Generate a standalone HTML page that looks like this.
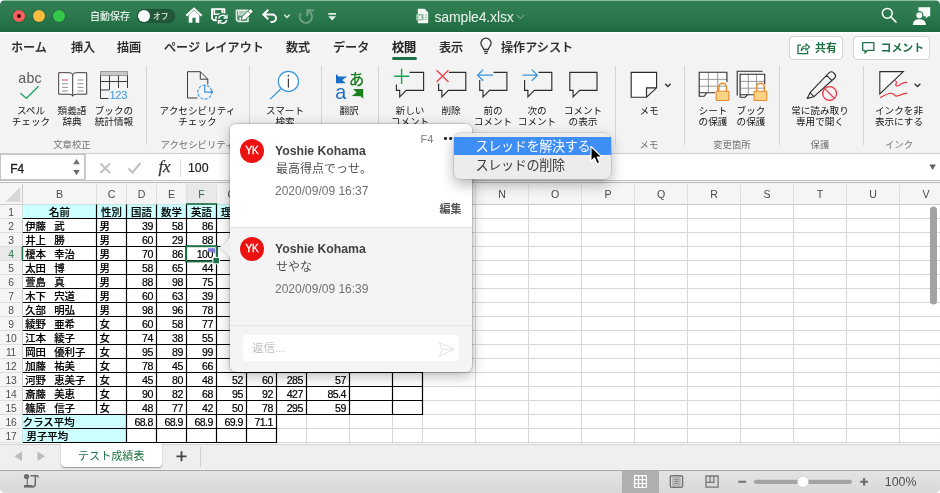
<!DOCTYPE html>
<html lang="ja"><head><meta charset="utf-8"><title>sample4.xlsx</title>
<style>
*{box-sizing:border-box;margin:0;padding:0}
html,body{width:940px;height:493px;overflow:hidden;background:#fff}
body{font-family:"Liberation Sans","Noto Sans CJK JP",sans-serif;position:relative;color:#333}
#win{position:absolute;left:0;top:0;width:940px;height:493px;border-radius:5px 5px 5px 5px;overflow:hidden;background:#f3f3f3;will-change:transform;transform:translateZ(0)}
.abs{position:absolute}
#title{position:absolute;left:0;top:0;width:940px;height:32px;background:linear-gradient(#8cbd9f 0,#8cbd9f 1px,#317f53 1px,#2d7a4f 14px,#206c42 31px,#1c643c 32px)}
.tl{position:absolute;top:10px;width:12px;height:12px;border-radius:50%}
#tabs{position:absolute;left:0;top:32px;width:940px;height:31px;background:#f4f4f4}
.tab{position:absolute;top:38px;height:20px;line-height:20px;font-size:12.1px;font-weight:500;color:#2a2a2a;white-space:nowrap;letter-spacing:0;-webkit-text-stroke:.15px #2a2a2a}
#ribbon{position:absolute;left:0;top:63px;width:940px;height:90px;background:#f3f3f3}
.sep{position:absolute;top:66px;width:1px;height:79px;background:#d4d4d4}
.rl{position:absolute;top:106.3px;width:120px;margin-left:-60px;text-align:center;font-size:9.65px;line-height:10.8px;color:#161616;white-space:nowrap;font-weight:400}
.gl{position:absolute;top:138px;width:120px;margin-left:-60px;text-align:center;font-size:9.4px;line-height:14px;color:#707070;white-space:nowrap}
.ico{position:absolute;overflow:visible}
#fbar{position:absolute;left:0;top:153px;width:940px;height:30px;background:#fff;border-top:1px solid #cfcfcf}
#grid{position:absolute;left:0;top:183px;width:940px;height:260px}
#tabbar{position:absolute;left:0;top:444px;width:940px;height:26px;background:#efefef}
#status{position:absolute;left:0;top:470px;width:940px;height:23px;background:linear-gradient(#e3e3e3,#d8d8d8);border-top:1px solid #a9a9a9}
</style></head>
<body><div id="win">
<div id="title"><div class="tl" style="left:13px;background:#fc615d;box-shadow:0 0 0 .6px rgba(0,0,0,.22)"></div><div class="tl" style="left:33px;background:#fdbc40;box-shadow:0 0 0 .6px rgba(0,0,0,.22)"></div><div class="tl" style="left:53px;background:#34c84a;box-shadow:0 0 0 .6px rgba(0,0,0,.22)"></div><div class="abs" style="left:17px;top:14px;width:4px;height:4px;border-radius:50%;background:#4d0000"></div><div class="abs" style="left:90px;top:9.500px;font-size:10px;line-height:14px;font-weight:500;color:#e9f2ec;white-space:nowrap">自動保存</div><div class="abs" style="left:137.300px;top:9.300px;width:37.500px;height:13.500px;border-radius:7px;background:#235739;box-shadow:inset 0 0 0 .5px #1d4c31"></div><div class="abs" style="left:138px;top:9.900px;width:12.300px;height:12.300px;border-radius:50%;background:#fff"></div><div class="abs" style="left:153px;top:9.700px;font-size:7.800px;line-height:13px;font-weight:500;color:#e3ece6;white-space:nowrap">オフ</div><svg class="ico" style="left:0;top:0" width="940" height="32" viewBox="0 0 940 32"><path d="M186.300 15.800 L194 8.600 L201.700 15.800" fill="none" stroke="#fff" stroke-width="2.100"/><path d="M188.700 15.300 L194 10.400 L199.300 15.300 V22.700 H195.600 V17.800 H192.400 V22.700 H188.700 Z" fill="#fff"/><path d="M212 9.100 H224.400 V20.300 H214 L212 18.300 Z" fill="none" stroke="#fff" stroke-width="1.900" stroke-linejoin="round"/><path d="M214.300 9.100 V14.300 H222.300 V9.100" fill="none" stroke="#fff" stroke-width="1.600"/><rect x="215.300" y="16.400" width="3.300" height="4" fill="#fff"/><circle cx="222.700" cy="19.300" r="6.200" fill="#27744a"/><path d="M218.700 18.600 A4.100 4.100 0 0 1 226.200 17.200" fill="none" stroke="#fff" stroke-width="1.400"/><path d="M227 14.600 V18 H223.600" fill="none" stroke="#fff" stroke-width="1.300"/><path d="M226.700 20 A4.100 4.100 0 0 1 219.200 21.400" fill="none" stroke="#fff" stroke-width="1.400"/><path d="M218.400 24 V20.600 H221.800" fill="none" stroke="#fff" stroke-width="1.300"/><path d="M236.400 10.300 H248 V21.600 H238.400 L236.400 19.600 Z" fill="rgba(255,255,255,.22)" stroke="#dcebe2" stroke-width="1.500" stroke-linejoin="round"/><path d="M238.600 10.300 V15 H246 V10.300" fill="rgba(255,255,255,.5)" stroke="#dcebe2" stroke-width="1.100"/><rect x="239.600" y="17.400" width="3.200" height="4" fill="#e9f2ed"/><path d="M241.200 20.600 L242.300 16.400 L249.300 9.400 a1.500 1.500 0 0 1 2.100 0 l1 1 a1.500 1.500 0 0 1 0 2.100 L245.400 19.500 Z" fill="#fff" stroke="#256f47" stroke-width=".900"/><path d="M247.800 10.900 L250.900 14" stroke="#256f47" stroke-width=".700"/><path d="M263.800 14.500 H272.300 a3.700 3.700 0 0 1 0 7.400 H270.500" fill="none" stroke="#fff" stroke-width="2"/><path d="M268.300 9.700 L263.300 14.500 L268.300 19.300" fill="none" stroke="#fff" stroke-width="2"/><path d="M284.300 14.700 L287 17.500 L289.700 14.700" fill="none" stroke="#e3ede7" stroke-width="1.400"/><path d="M300.900 13.300 A6.100 6.100 0 1 0 311.100 13.600 L307.800 10.800" fill="none" stroke="#72a489" stroke-width="1.900"/><path d="M307.300 16.200 V10.300 H313.800" fill="none" stroke="#72a489" stroke-width="1.900"/><path d="M328.300 13.900 H336" stroke="#e6efe9" stroke-width="1.700"/><path d="M328.300 16.300 H336 L332.150 20.500 Z" fill="#e6efe9"/></svg><svg class="ico" style="left:416px;top:8px" width="13" height="16" viewBox="0 0 13 16"><path d="M2.5 .8 H8.6 L12.2 4.4 V14.6 a.7.7 0 0 1-.7.7 H2.5 a.7.7 0 0 1-.7-.7 V1.5 a.7.7 0 0 1 .7-.7z" fill="#f4f8f5"/><rect x="0" y="6" width="7.6" height="6.6" rx=".8" fill="#8dbb9e"/><path d="M2 7.4 L5.6 11.4 M5.6 7.4 L2 11.4" stroke="#fff" stroke-width="1.1"/><path d="M8.8 7h2.4M8.8 9.2h2.4M8.8 11.4h2.4" stroke="#8dbb9e" stroke-width="1"/></svg><div class="abs" style="left:434.5px;top:7.6px;font-size:14px;line-height:18px;color:#eef4f0;white-space:nowrap;letter-spacing:-.15px">sample4.xlsx</div><svg class="ico" style="left:516px;top:14px" width="9" height="6" viewBox="0 0 9 6"><path d="M1 1 L4.5 4.5 L8 1" fill="none" stroke="#6fa387" stroke-width="1.1"/></svg><svg class="ico" style="left:880.300px;top:6.200px" width="18" height="18" viewBox="0 0 18 18"><circle cx="7.3" cy="7.3" r="4.9" fill="none" stroke="#fff" stroke-width="1.5"/><path d="M10.9 10.9 L16 16" stroke="#fff" stroke-width="1.7" stroke-linecap="round"/></svg><svg class="ico" style="left:912px;top:6px" width="20" height="20" viewBox="0 0 20 20"><path d="M6.500 1.200 H18.200 V10.300 H16.300 L13.800 12.600 V10.300 H6.500 Z" fill="#fff"/><circle cx="7.3" cy="9.3" r="3.6" fill="#fff" stroke="#2a774c" stroke-width="1.2"/><path d="M.8 19 C1 14.8 3.6 13.2 7.3 13.2 S13.6 14.8 13.8 19 Z" fill="#fff"/></svg></div>
<div id="tabs"></div><div class="abs" style="left:0;top:32px;width:940px;height:1.500px;background:#fdfdfd"></div><div class="tab" style="left:11px">ホーム</div><div class="tab" style="left:71px">挿入</div><div class="tab" style="left:117px">描画</div><div class="tab" style="left:164px">ページ レイアウト</div><div class="tab" style="left:286px">数式</div><div class="tab" style="left:333px">データ</div><div class="tab" style="left:392px;font-weight:700;color:#222">校閲</div><div class="tab" style="left:439px">表示</div><div class="tab" style="left:501px">操作アシスト</div><div class="abs" style="left:392px;top:57px;width:25px;height:3px;border-radius:1.500px;background:#1e7145"></div><svg class="ico" style="left:479.400px;top:37.200px" width="14" height="18" viewBox="0 0 14 18"><path d="M4.600 12.300 C4.600 10.200 1.900 9.300 1.900 6.300 a5.100 5.100 0 0 1 10.200 0 C12.100 9.300 9.400 10.200 9.400 12.300 Z" fill="none" stroke="#333" stroke-width="1.250"/><path d="M4.900 14.300 H9.100 M5.500 16.300 H8.500" stroke="#333" stroke-width="1.250"/></svg><div class="abs" style="left:789px;top:36px;width:54px;height:24px;border:1px solid #d2d2d2;border-radius:4px;background:#fff"></div><svg class="ico" style="left:796px;top:41px" width="15" height="14" viewBox="0 0 15 14"><path d="M5 4.2 H2 V12.6 H11.6 V9.6" fill="none" stroke="#1e7145" stroke-width="1.3"/><path d="M5.3 9.6 C5.6 6.6 7.4 5 10 5 V2.8 L13.6 6 L10 9.2 V7 C8 7 6.6 7.8 5.3 9.6 Z" fill="none" stroke="#1e7145" stroke-width="1.1" stroke-linejoin="round"/></svg><div class="abs" style="left:815px;top:38px;font-size:10.900px;line-height:20px;font-weight:700;color:#1e7145;white-space:nowrap">共有</div><div class="abs" style="left:853px;top:36px;width:76.500px;height:24px;border:1px solid #d2d2d2;border-radius:4px;background:#fff"></div><svg class="ico" style="left:861px;top:41px" width="15" height="14" viewBox="0 0 15 14"><path d="M1.7 1.7 H12.9 V9.3 H6.6 L4 12 V9.3 H1.7 Z" fill="none" stroke="#1e7145" stroke-width="1.3" stroke-linejoin="round"/></svg><div class="abs" style="left:880.500px;top:38px;font-size:10.900px;line-height:20px;font-weight:700;color:#1e7145;white-space:nowrap">コメント</div>
<div id="ribbon"></div><div class="sep" style="left:146px"></div><div class="sep" style="left:249px"></div><div class="sep" style="left:321px"></div><div class="sep" style="left:378px"></div><div class="sep" style="left:615px"></div><div class="sep" style="left:684px"></div><div class="sep" style="left:779px"></div><div class="sep" style="left:863px"></div><div class="rl" style="left:31px">スペル<br>チェック</div><div class="rl" style="left:72px">類義語<br>辞典</div><div class="rl" style="left:114px">ブックの<br>統計情報</div><div class="rl" style="left:197.5px">アクセシビリティ<br>チェック</div><div class="rl" style="left:285px">スマート<br>検索</div><div class="rl" style="left:349px">翻訳</div><div class="rl" style="left:410px">新しい<br>コメント</div><div class="rl" style="left:451px">削除</div><div class="rl" style="left:493px">前の<br>コメント</div><div class="rl" style="left:537px">次の<br>コメント</div><div class="rl" style="left:583px">コメント<br>の表示</div><div class="rl" style="left:649px">メモ</div><div class="rl" style="left:713px">シート<br>の保護</div><div class="rl" style="left:751px">ブック<br>の保護</div><div class="rl" style="left:820px">常に読み取り<br>専用で開く</div><div class="rl" style="left:899px">インクを非<br>表示にする</div><div class="gl" style="left:72px">文章校正</div><div class="gl" style="left:197.5px">アクセシビリティ</div><div class="gl" style="left:649px">メモ</div><div class="gl" style="left:732px">変更箇所</div><div class="gl" style="left:820px">保護</div><div class="gl" style="left:899px">インク</div><div class="abs" style="left:18.3px;top:67.6px;font-size:14.2px;line-height:20px;color:#5c5c5c;letter-spacing:.2px">abc</div><svg class="ico" style="left:0;top:63px" width="940" height="90" viewBox="0 63 940 90"><path d="M20.3 93.2 L26.4 98.3 L38.6 86.2" fill="none" stroke="#21a366" stroke-width="1.3"/><path d="M58.7 72.7 H69 Q72.7 72.7 72.7 75 Q72.7 72.7 76.4 72.7 H86.7 V94.2 H76.4 Q72.7 94.2 72.7 96.3 Q72.7 94.2 69 94.2 H58.7 Z M72.7 75 V96" fill="#fff" stroke="#3b3b3b" stroke-width="1"/><path d="M62 80 h6" stroke="#e8414d" stroke-width="1"/><path d="M62 83.700 h6 M62 87.400 h6 M62 91 h6 M77.500 80 h6 M77.500 83.700 h6 M77.500 87.400 h6 M77.500 91 h6" stroke="#777" stroke-width=".8"/><rect x="100.500" y="71.500" width="27" height="4" fill="#c9c9c9" stroke="#8a8a8a" stroke-width=".8"/><path d="M100.500 75.500 V98.500 H108.500 M127.500 75.500 V88 M100.500 81.500 H127.500 M100.500 90 H109 M109.500 75.500 V90 M118.500 75.500 V88" fill="none" stroke="#3b3b3b" stroke-width="1"/><text x="109.400" y="98.700" font-size="11.200" fill="#3a96dd" font-family="Liberation Sans, sans-serif" letter-spacing="-.3">123</text><path d="M197.500 98 H187.500 V71.700 H200.300 L207.800 79.200 V84.500 M200.300 71.700 V79.200 H207.800" fill="none" stroke="#3b3b3b" stroke-width="1"/><circle cx="204.800" cy="92.100" r="7" fill="none" stroke="#3a96dd" stroke-width="1.100" stroke-dasharray="3 1.500" stroke-dashoffset="1"/><path d="M204.800 85.300 V92.100 H211.500" fill="none" stroke="#3a96dd" stroke-width="1.200"/><path d="M210.800 89.700 l2.800 2.400 -2.800 2.400z" fill="#3a96dd"/><circle cx="288.400" cy="81.400" r="10.100" fill="#fff" stroke="#3a96dd" stroke-width="1.200"/><path d="M281 88.800 L270.200 99.100" stroke="#3a96dd" stroke-width="1.300"/><path d="M288.400 78.500 V87.500" stroke="#3b3b3b" stroke-width="1.200"/><circle cx="288.400" cy="75.700" r=".9" fill="#3b3b3b"/><path d="M336 74.100 L338.600 76.400 L347.300 76.400 L342.300 79.900 L345.800 83.300 H336 Z" fill="#1b6ec8"/><text x="335.200" y="98.600" font-size="21" fill="#1b6ec8" font-family="Liberation Sans, sans-serif" textLength="11" lengthAdjust="spacingAndGlyphs">a</text><text x="348.700" y="85.200" font-size="15.600" font-weight="500" fill="#1a7f1e" font-family="Liberation Sans, Noto Sans CJK JP, sans-serif">あ</text><path d="M363.200 98.800 L360.600 96.300 L351.600 96.100 L356.600 92.600 L353.100 89.100 H363.200 Z" fill="#1a7f1e"/><path d="M409.5 72.300 H423.59999999999997 V90.300 H406.2 L399.7 96.800 V90.300 H396.4 V84.5" fill="none" stroke="#2d2d2d" stroke-width="1.150" stroke-linejoin="miter"/><path d="M401.600 68.700 V84 M394.300 76.300 H409.200" stroke="#13a34a" stroke-width="1.400"/><path d="M449 72.300 H465.8 V90.300 H448.40000000000003 L441.90000000000003 96.800 V90.300 H438.6 V83.5" fill="none" stroke="#2d2d2d" stroke-width="1.150" stroke-linejoin="miter"/><path d="M436.500 70.300 L448.500 82 M448.500 70.300 L436.500 82" stroke="#ef3e4a" stroke-width="1.300"/><path d="M493.5 72.300 H506.9 V90.300 H489.5 L483.0 96.800 V90.300 H479.7 V80" fill="none" stroke="#2d2d2d" stroke-width="1.150" stroke-linejoin="miter"/><path d="M477.600 75.200 H493 M483.200 69.600 L477.600 75.200 L483.200 80.800" fill="none" stroke="#3a96dd" stroke-width="1.300"/><path d="M538.5 72.300 H551.8000000000001 V90.300 H534.4 L527.9 96.800 V90.300 H524.6 V80" fill="none" stroke="#2d2d2d" stroke-width="1.150" stroke-linejoin="miter"/><path d="M522.400 75.200 H537.400 M531.800 69.600 L537.400 75.200 L531.800 80.800" fill="none" stroke="#3a96dd" stroke-width="1.300"/><path d="M569.8 72.300 H597.0 V90.300 H579.5999999999999 L573.0999999999999 96.800 V90.300 H569.8 V72.3 Z" fill="none" stroke="#2d2d2d" stroke-width="1.150" stroke-linejoin="miter"/><path d="M631.200 72.300 H656.600 V87.800 L646.500 97.200 H631.200 Z M656.600 87.800 H646.500 V97.200" fill="#fff" stroke="#2d2d2d" stroke-width="1.150" stroke-linejoin="miter"/><path d="M665.200 83.700 L667.900 86.500 L670.600 83.700" fill="none" stroke="#333" stroke-width="1.400"/><path d="M699.2 72.3 H726.9000000000001 V92.3 L722.9000000000001 96.3 H699.2 Z" fill="#fcfcfc" stroke="none"/><path d="M708.4 72.3 V92.69999999999999 M717.7 72.3 V92.69999999999999 M699.2 79.4 H726.9000000000001 M699.2 86.2 H726.9000000000001 " stroke="#8e8e8e" stroke-width=".9" fill="none"/><path d="M726.9000000000001 82.3 V72.3 H699.2 V96.3 H704.2 L706.9000000000001 92.69999999999999 M699.2 92.69999999999999 H715.2" fill="none" stroke="#2d2d2d" stroke-width="1.100"/><path d="M718.8000000000001 91.5 V87 a3.800 3.800 0 0 1 7.600 0 V91.5" fill="none" stroke="#e98b2c" stroke-width="1.500"/><rect x="716.2" y="91.2" width="12.700" height="9.300" rx=".6" fill="#fad384" stroke="#e98b2c" stroke-width="1.100"/><path d="M737.200 95.500 V71.200 H762.600" fill="none" stroke="#2d2d2d" stroke-width="1.100"/><path d="M740.1 74.3 H764.7 V93.19999999999999 L760.7 97.19999999999999 H740.1 Z" fill="#fcfcfc" stroke="none"/><path d="M748.3 74.3 V94.69999999999999 M756.5 74.3 V94.69999999999999 M740.1 81.4 H764.7 M740.1 88.2 H764.7 " stroke="#8e8e8e" stroke-width=".9" fill="none"/><path d="M764.7 84.3 V74.3 H740.1 V97.19999999999999 H745.1 L747.8000000000001 94.69999999999999 M740.1 94.69999999999999 H756.1" fill="none" stroke="#2d2d2d" stroke-width="1.100"/><path d="M756.7 91.5 V87 a3.800 3.800 0 0 1 7.600 0 V91.5" fill="none" stroke="#e98b2c" stroke-width="1.500"/><rect x="754.1" y="91.2" width="12.700" height="9.300" rx=".6" fill="#fad384" stroke="#e98b2c" stroke-width="1.100"/><path d="M810 92.700 L829.200 72.700 a2.900 2.900 0 0 1 4.200 0 l1.300 1.300 a2.900 2.900 0 0 1 0 4 L813.900 96.700 M810 92.700 L813.900 96.700 L807.200 98.400 Z M826.700 75.300 L832.200 80.800" fill="none" stroke="#2d2d2d" stroke-width="1.100" stroke-linejoin="round"/><circle cx="829.600" cy="93.500" r="6.900" fill="#f3f3f3" stroke="#f0323e" stroke-width="1.300"/><path d="M824.700 88.600 L834.500 98.400" stroke="#f0323e" stroke-width="1.300"/><path d="M879.800 71.600 H903.300 L879.800 94 Z" fill="#fafafa" stroke="#2d2d2d" stroke-width="1.100" stroke-linejoin="miter"/><path d="M894.500 80.500 c2 .5 2.500 2 1.500 3.500 s.5 2.500 3 1.200 s4-3.500 8.300-2.700" fill="none" stroke="#f0323e" stroke-width="1.200"/><path d="M880.200 97.800 c4-2.500 8-5 11.500-4.500 s2 3.300 5 2.800 s6-2.500 10.600-3" fill="none" stroke="#f0323e" stroke-width="1.200"/><path d="M914.600 83.700 L917.500 86.600 L920.400 83.700" fill="none" stroke="#333" stroke-width="1.400"/></svg>
<div id="fbar"></div><div class="abs" style="left:0;top:154px;width:84.500px;height:25.500px;border:1px solid #c4c4c4;background:#fff"></div><div class="abs" style="left:85px;top:154px;width:855px;height:26px;border-left:1px solid #d0d0d0;background:#fff"></div><div class="abs" style="left:10.200px;top:158.500px;font-size:12px;line-height:20px;color:#222;-webkit-text-stroke:.3px #222">F4</div><svg class="ico" style="left:0;top:153px" width="940" height="30" viewBox="0 153 940 30"><path d="M73.200 164.200 L76.500 159 L79.800 164.200 Z M73.200 170.100 L76.500 175.300 L79.800 170.100 Z" fill="#6e6e6e"/><path d="M100.500 163.500 L110 173 M110 163.500 L100.500 173" stroke="#c1c1c1" stroke-width="2" fill="none"/><path d="M128.500 168.500 L132.500 172.500 L140.500 163" stroke="#c1c1c1" stroke-width="2" fill="none"/><path d="M180.500 159 V177" stroke="#dcdcdc" stroke-width="1"/><path d="M929.300 164.600 H935.900 L932.600 170 Z" fill="#636363"/></svg><div class="abs" style="left:158.500px;top:155.800px;font-family:'Liberation Serif',serif;font-style:italic;font-size:17px;line-height:22px;color:#333;letter-spacing:-.3px;-webkit-text-stroke:.25px #333">fx</div><div class="abs" style="left:188px;top:158.300px;font-size:12.300px;line-height:20px;color:#222;-webkit-text-stroke:.2px #222">100</div><div class="abs" style="left:0;top:180px;width:940px;height:1px;background:#c4c4c4"></div><div class="abs" style="left:0;top:181px;width:940px;height:1px;background:#f6f6f6"></div><div class="abs" style="left:0;top:182px;width:940px;height:1px;background:#bdbdbd"></div><svg class="ico" style="left:0;top:183px" width="940" height="261" viewBox="0 183 940 261" font-family="Liberation Sans, Noto Sans CJK JP, sans-serif"><rect x="0" y="183" width="940" height="261" fill="#fff"/><rect x="0" y="183" width="940" height="21.100" fill="#f5f5f5"/><rect x="0" y="204" width="22.500" height="240" fill="#f5f5f5"/><rect x="186.500" y="183.500" width="30" height="20.500" fill="#e9e9e9"/><rect x="0" y="246.50" width="22.500" height="14.0" fill="#e9e9e9"/><path d="M96.5 204 V443.500 M126.5 204 V443.500 M156.5 204 V443.500 M186.5 204 V443.500 M216.5 204 V443.500 M246.5 204 V443.500 M276.5 204 V443.500 M306.5 204 V443.500 M349.5 204 V443.500 M392.5 204 V443.500 M422.5 204 V443.500 M475.5 204 V443.500 M528.5 204 V443.500 M581.5 204 V443.500 M634.5 204 V443.500 M687.5 204 V443.500 M740.5 204 V443.500 M793.5 204 V443.500 M846.5 204 V443.500 M899.5 204 V443.500 M952.5 204 V443.500 M22.500 218.50 H940 M22.500 232.50 H940 M22.500 246.50 H940 M22.500 260.50 H940 M22.500 274.50 H940 M22.500 288.50 H940 M22.500 302.50 H940 M22.500 316.50 H940 M22.500 330.50 H940 M22.500 344.50 H940 M22.500 358.50 H940 M22.500 372.50 H940 M22.500 386.50 H940 M22.500 400.50 H940 M22.500 414.50 H940 M22.500 428.50 H940 M22.500 442.50 H940 " stroke="#d6d6d6" stroke-width="1" fill="none"/><path d="M96.5 184.500 V204 M126.5 184.500 V204 M156.5 184.500 V204 M186.5 184.500 V204 M216.5 184.500 V204 M246.5 184.500 V204 M276.5 184.500 V204 M306.5 184.500 V204 M349.5 184.500 V204 M392.5 184.500 V204 M422.5 184.500 V204 M475.5 184.500 V204 M528.5 184.500 V204 M581.5 184.500 V204 M634.5 184.500 V204 M687.5 184.500 V204 M740.5 184.500 V204 M793.5 184.500 V204 M846.5 184.500 V204 M899.5 184.500 V204 M952.5 184.500 V204 M0 218.50 H22.500 M0 232.50 H22.500 M0 246.50 H22.500 M0 260.50 H22.500 M0 274.50 H22.500 M0 288.50 H22.500 M0 302.50 H22.500 M0 316.50 H22.500 M0 330.50 H22.500 M0 344.50 H22.500 M0 358.50 H22.500 M0 372.50 H22.500 M0 386.50 H22.500 M0 400.50 H22.500 M0 414.50 H22.500 M0 428.50 H22.500 M0 442.50 H22.500 " stroke="#dfdfdf" stroke-width="1" fill="none"/><path d="M0 204.50 H940 M22.500 184 V443.500" stroke="#c9c9c9" stroke-width="1" fill="none"/><path d="M20.300 187.300 V201.700 H5.500 Z" fill="#d6d6d6"/><rect x="22.500" y="204.50" width="400.0" height="14.0" fill="#ccffff"/><rect x="22.500" y="414.50" width="104.0" height="28.00" fill="#ccffff"/><path d="M22.900 218.50 H423.100 M22.900 232.50 H423.100 M22.900 246.50 H423.100 M22.900 260.50 H423.100 M22.900 274.50 H423.100 M22.900 288.50 H423.100 M22.900 302.50 H423.100 M22.900 316.50 H423.100 M22.900 330.50 H423.100 M22.900 344.50 H423.100 M22.900 358.50 H423.100 M22.900 372.50 H423.100 M22.900 386.50 H423.100 M22.900 400.50 H423.100 M22.900 414.50 H423.100 M22.900 428.50 H277.100 M22.900 442.50 H277.100 M96.5 204.50 V414.50 M126.5 204.50 V414.50 M156.5 204.50 V414.50 M186.5 204.50 V414.50 M216.5 204.50 V414.50 M246.5 204.50 V414.50 M276.5 204.50 V414.50 M306.5 204.50 V414.50 M349.5 204.50 V414.50 M392.5 204.50 V414.50 M422.5 204.50 V414.50 M126.5 414.50 V442.50 M156.5 414.50 V442.50 M186.5 414.50 V442.50 M216.5 414.50 V442.50 M246.5 414.50 V442.50 M276.5 414.50 V442.50 " stroke="#000" stroke-width="1.200" fill="none"/><text x="59.5" y="198" font-size="10.600" text-anchor="middle" fill="#4a4a4a">B</text><text x="111.5" y="198" font-size="10.600" text-anchor="middle" fill="#4a4a4a">C</text><text x="141.5" y="198" font-size="10.600" text-anchor="middle" fill="#4a4a4a">D</text><text x="171.5" y="198" font-size="10.600" text-anchor="middle" fill="#4a4a4a">E</text><text x="201.5" y="198" font-size="10.600" text-anchor="middle" fill="#1e7145">F</text><text x="231.5" y="198" font-size="10.600" text-anchor="middle" fill="#4a4a4a">G</text><text x="261.5" y="198" font-size="10.600" text-anchor="middle" fill="#4a4a4a">H</text><text x="291.5" y="198" font-size="10.600" text-anchor="middle" fill="#4a4a4a">I</text><text x="328.0" y="198" font-size="10.600" text-anchor="middle" fill="#4a4a4a">J</text><text x="371.0" y="198" font-size="10.600" text-anchor="middle" fill="#4a4a4a">K</text><text x="407.5" y="198" font-size="10.600" text-anchor="middle" fill="#4a4a4a">L</text><text x="449.0" y="198" font-size="10.600" text-anchor="middle" fill="#4a4a4a">M</text><text x="502.0" y="198" font-size="10.600" text-anchor="middle" fill="#4a4a4a">N</text><text x="555.0" y="198" font-size="10.600" text-anchor="middle" fill="#4a4a4a">O</text><text x="608.0" y="198" font-size="10.600" text-anchor="middle" fill="#4a4a4a">P</text><text x="661.0" y="198" font-size="10.600" text-anchor="middle" fill="#4a4a4a">Q</text><text x="714.0" y="198" font-size="10.600" text-anchor="middle" fill="#4a4a4a">R</text><text x="767.0" y="198" font-size="10.600" text-anchor="middle" fill="#4a4a4a">S</text><text x="820.0" y="198" font-size="10.600" text-anchor="middle" fill="#4a4a4a">T</text><text x="873.0" y="198" font-size="10.600" text-anchor="middle" fill="#4a4a4a">U</text><text x="926.0" y="198" font-size="10.600" text-anchor="middle" fill="#4a4a4a">V</text><text x="10.900" y="215.70" font-size="10.300" text-anchor="middle" fill="#505050" letter-spacing="-.4">1</text><text x="10.900" y="229.70" font-size="10.300" text-anchor="middle" fill="#505050" letter-spacing="-.4">2</text><text x="10.900" y="243.70" font-size="10.300" text-anchor="middle" fill="#505050" letter-spacing="-.4">3</text><text x="10.900" y="257.70" font-size="10.300" text-anchor="middle" fill="#1e7145" letter-spacing="-.4">4</text><text x="10.900" y="271.70" font-size="10.300" text-anchor="middle" fill="#505050" letter-spacing="-.4">5</text><text x="10.900" y="285.70" font-size="10.300" text-anchor="middle" fill="#505050" letter-spacing="-.4">6</text><text x="10.900" y="299.70" font-size="10.300" text-anchor="middle" fill="#505050" letter-spacing="-.4">7</text><text x="10.900" y="313.70" font-size="10.300" text-anchor="middle" fill="#505050" letter-spacing="-.4">8</text><text x="10.900" y="327.70" font-size="10.300" text-anchor="middle" fill="#505050" letter-spacing="-.4">9</text><text x="10.900" y="341.70" font-size="10.300" text-anchor="middle" fill="#505050" letter-spacing="-.4">10</text><text x="10.900" y="355.70" font-size="10.300" text-anchor="middle" fill="#505050" letter-spacing="-.4">11</text><text x="10.900" y="369.70" font-size="10.300" text-anchor="middle" fill="#505050" letter-spacing="-.4">12</text><text x="10.900" y="383.70" font-size="10.300" text-anchor="middle" fill="#505050" letter-spacing="-.4">13</text><text x="10.900" y="397.70" font-size="10.300" text-anchor="middle" fill="#505050" letter-spacing="-.4">14</text><text x="10.900" y="411.70" font-size="10.300" text-anchor="middle" fill="#505050" letter-spacing="-.4">15</text><text x="10.900" y="425.70" font-size="10.300" text-anchor="middle" fill="#505050" letter-spacing="-.4">16</text><text x="10.900" y="439.70" font-size="10.300" text-anchor="middle" fill="#505050" letter-spacing="-.4">17</text><text x="59.5" y="215.80" font-size="10.4" font-weight="500" text-anchor="middle" fill="#000" stroke="#000" stroke-width=".18">名前</text><text x="111.5" y="215.80" font-size="10.4" font-weight="500" text-anchor="middle" fill="#000" stroke="#000" stroke-width=".18">性別</text><text x="141.5" y="215.80" font-size="10.4" font-weight="500" text-anchor="middle" fill="#000" stroke="#000" stroke-width=".18">国語</text><text x="171.5" y="215.80" font-size="10.4" font-weight="500" text-anchor="middle" fill="#000" stroke="#000" stroke-width=".18">数学</text><text x="201.5" y="215.80" font-size="10.4" font-weight="500" text-anchor="middle" fill="#000" stroke="#000" stroke-width=".18">英語</text><text x="231.5" y="215.80" font-size="10.4" font-weight="500" text-anchor="middle" fill="#000" stroke="#000" stroke-width=".18">理科</text><text x="25.2" y="229.80" font-size="10.4" font-weight="500" text-anchor="start" fill="#000" stroke="#000" stroke-width=".18">伊藤</text><text x="54.2" y="229.80" font-size="10.4" font-weight="500" text-anchor="start" fill="#000" stroke="#000" stroke-width=".18">武</text><text x="99.5" y="229.80" font-size="10.4" font-weight="500" text-anchor="start" fill="#000" stroke="#000" stroke-width=".18">男</text><text x="152.8" y="229.70" font-size="10.600" text-anchor="end" fill="#000" letter-spacing="-.55" stroke="#000" stroke-width=".2">39</text><text x="182.8" y="229.70" font-size="10.600" text-anchor="end" fill="#000" letter-spacing="-.55" stroke="#000" stroke-width=".2">58</text><text x="212.8" y="229.70" font-size="10.600" text-anchor="end" fill="#000" letter-spacing="-.55" stroke="#000" stroke-width=".2">86</text><text x="25.2" y="243.80" font-size="10.4" font-weight="500" text-anchor="start" fill="#000" stroke="#000" stroke-width=".18">井上</text><text x="54.2" y="243.80" font-size="10.4" font-weight="500" text-anchor="start" fill="#000" stroke="#000" stroke-width=".18">勝</text><text x="99.5" y="243.80" font-size="10.4" font-weight="500" text-anchor="start" fill="#000" stroke="#000" stroke-width=".18">男</text><text x="152.8" y="243.70" font-size="10.600" text-anchor="end" fill="#000" letter-spacing="-.55" stroke="#000" stroke-width=".2">60</text><text x="182.8" y="243.70" font-size="10.600" text-anchor="end" fill="#000" letter-spacing="-.55" stroke="#000" stroke-width=".2">29</text><text x="212.8" y="243.70" font-size="10.600" text-anchor="end" fill="#000" letter-spacing="-.55" stroke="#000" stroke-width=".2">88</text><text x="25.2" y="257.80" font-size="10.4" font-weight="500" text-anchor="start" fill="#000" stroke="#000" stroke-width=".18">榎本</text><text x="54.2" y="257.80" font-size="10.4" font-weight="500" text-anchor="start" fill="#000" stroke="#000" stroke-width=".18">幸治</text><text x="99.5" y="257.80" font-size="10.4" font-weight="500" text-anchor="start" fill="#000" stroke="#000" stroke-width=".18">男</text><text x="152.8" y="257.70" font-size="10.600" text-anchor="end" fill="#000" letter-spacing="-.55" stroke="#000" stroke-width=".2">70</text><text x="182.8" y="257.70" font-size="10.600" text-anchor="end" fill="#000" letter-spacing="-.55" stroke="#000" stroke-width=".2">86</text><text x="212.8" y="257.70" font-size="10.600" text-anchor="end" fill="#000" letter-spacing="-.55" stroke="#000" stroke-width=".2">100</text><text x="25.2" y="271.80" font-size="10.4" font-weight="500" text-anchor="start" fill="#000" stroke="#000" stroke-width=".18">太田</text><text x="54.2" y="271.80" font-size="10.4" font-weight="500" text-anchor="start" fill="#000" stroke="#000" stroke-width=".18">博</text><text x="99.5" y="271.80" font-size="10.4" font-weight="500" text-anchor="start" fill="#000" stroke="#000" stroke-width=".18">男</text><text x="152.8" y="271.70" font-size="10.600" text-anchor="end" fill="#000" letter-spacing="-.55" stroke="#000" stroke-width=".2">58</text><text x="182.8" y="271.70" font-size="10.600" text-anchor="end" fill="#000" letter-spacing="-.55" stroke="#000" stroke-width=".2">65</text><text x="212.8" y="271.70" font-size="10.600" text-anchor="end" fill="#000" letter-spacing="-.55" stroke="#000" stroke-width=".2">44</text><text x="25.2" y="285.80" font-size="10.4" font-weight="500" text-anchor="start" fill="#000" stroke="#000" stroke-width=".18">萱島</text><text x="54.2" y="285.80" font-size="10.4" font-weight="500" text-anchor="start" fill="#000" stroke="#000" stroke-width=".18">真</text><text x="99.5" y="285.80" font-size="10.4" font-weight="500" text-anchor="start" fill="#000" stroke="#000" stroke-width=".18">男</text><text x="152.8" y="285.70" font-size="10.600" text-anchor="end" fill="#000" letter-spacing="-.55" stroke="#000" stroke-width=".2">88</text><text x="182.8" y="285.70" font-size="10.600" text-anchor="end" fill="#000" letter-spacing="-.55" stroke="#000" stroke-width=".2">98</text><text x="212.8" y="285.70" font-size="10.600" text-anchor="end" fill="#000" letter-spacing="-.55" stroke="#000" stroke-width=".2">75</text><text x="25.2" y="299.80" font-size="10.4" font-weight="500" text-anchor="start" fill="#000" stroke="#000" stroke-width=".18">木下</text><text x="54.2" y="299.80" font-size="10.4" font-weight="500" text-anchor="start" fill="#000" stroke="#000" stroke-width=".18">宍道</text><text x="99.5" y="299.80" font-size="10.4" font-weight="500" text-anchor="start" fill="#000" stroke="#000" stroke-width=".18">男</text><text x="152.8" y="299.70" font-size="10.600" text-anchor="end" fill="#000" letter-spacing="-.55" stroke="#000" stroke-width=".2">60</text><text x="182.8" y="299.70" font-size="10.600" text-anchor="end" fill="#000" letter-spacing="-.55" stroke="#000" stroke-width=".2">63</text><text x="212.8" y="299.70" font-size="10.600" text-anchor="end" fill="#000" letter-spacing="-.55" stroke="#000" stroke-width=".2">39</text><text x="25.2" y="313.80" font-size="10.4" font-weight="500" text-anchor="start" fill="#000" stroke="#000" stroke-width=".18">久部</text><text x="54.2" y="313.80" font-size="10.4" font-weight="500" text-anchor="start" fill="#000" stroke="#000" stroke-width=".18">明弘</text><text x="99.5" y="313.80" font-size="10.4" font-weight="500" text-anchor="start" fill="#000" stroke="#000" stroke-width=".18">男</text><text x="152.8" y="313.70" font-size="10.600" text-anchor="end" fill="#000" letter-spacing="-.55" stroke="#000" stroke-width=".2">98</text><text x="182.8" y="313.70" font-size="10.600" text-anchor="end" fill="#000" letter-spacing="-.55" stroke="#000" stroke-width=".2">96</text><text x="212.8" y="313.70" font-size="10.600" text-anchor="end" fill="#000" letter-spacing="-.55" stroke="#000" stroke-width=".2">78</text><text x="25.2" y="327.80" font-size="10.4" font-weight="500" text-anchor="start" fill="#000" stroke="#000" stroke-width=".18">綾野</text><text x="54.2" y="327.80" font-size="10.4" font-weight="500" text-anchor="start" fill="#000" stroke="#000" stroke-width=".18">亜希</text><text x="99.5" y="327.80" font-size="10.4" font-weight="500" text-anchor="start" fill="#000" stroke="#000" stroke-width=".18">女</text><text x="152.8" y="327.70" font-size="10.600" text-anchor="end" fill="#000" letter-spacing="-.55" stroke="#000" stroke-width=".2">60</text><text x="182.8" y="327.70" font-size="10.600" text-anchor="end" fill="#000" letter-spacing="-.55" stroke="#000" stroke-width=".2">58</text><text x="212.8" y="327.70" font-size="10.600" text-anchor="end" fill="#000" letter-spacing="-.55" stroke="#000" stroke-width=".2">77</text><text x="25.2" y="341.80" font-size="10.4" font-weight="500" text-anchor="start" fill="#000" stroke="#000" stroke-width=".18">江本</text><text x="54.2" y="341.80" font-size="10.4" font-weight="500" text-anchor="start" fill="#000" stroke="#000" stroke-width=".18">綾子</text><text x="99.5" y="341.80" font-size="10.4" font-weight="500" text-anchor="start" fill="#000" stroke="#000" stroke-width=".18">女</text><text x="152.8" y="341.70" font-size="10.600" text-anchor="end" fill="#000" letter-spacing="-.55" stroke="#000" stroke-width=".2">74</text><text x="182.8" y="341.70" font-size="10.600" text-anchor="end" fill="#000" letter-spacing="-.55" stroke="#000" stroke-width=".2">38</text><text x="212.8" y="341.70" font-size="10.600" text-anchor="end" fill="#000" letter-spacing="-.55" stroke="#000" stroke-width=".2">55</text><text x="25.2" y="355.80" font-size="10.4" font-weight="500" text-anchor="start" fill="#000" stroke="#000" stroke-width=".18">岡田</text><text x="54.2" y="355.80" font-size="10.4" font-weight="500" text-anchor="start" fill="#000" stroke="#000" stroke-width=".18">優利子</text><text x="99.5" y="355.80" font-size="10.4" font-weight="500" text-anchor="start" fill="#000" stroke="#000" stroke-width=".18">女</text><text x="152.8" y="355.70" font-size="10.600" text-anchor="end" fill="#000" letter-spacing="-.55" stroke="#000" stroke-width=".2">95</text><text x="182.8" y="355.70" font-size="10.600" text-anchor="end" fill="#000" letter-spacing="-.55" stroke="#000" stroke-width=".2">89</text><text x="212.8" y="355.70" font-size="10.600" text-anchor="end" fill="#000" letter-spacing="-.55" stroke="#000" stroke-width=".2">99</text><text x="25.2" y="369.80" font-size="10.4" font-weight="500" text-anchor="start" fill="#000" stroke="#000" stroke-width=".18">加藤</text><text x="54.2" y="369.80" font-size="10.4" font-weight="500" text-anchor="start" fill="#000" stroke="#000" stroke-width=".18">祐美</text><text x="99.5" y="369.80" font-size="10.4" font-weight="500" text-anchor="start" fill="#000" stroke="#000" stroke-width=".18">女</text><text x="152.8" y="369.70" font-size="10.600" text-anchor="end" fill="#000" letter-spacing="-.55" stroke="#000" stroke-width=".2">78</text><text x="182.8" y="369.70" font-size="10.600" text-anchor="end" fill="#000" letter-spacing="-.55" stroke="#000" stroke-width=".2">45</text><text x="212.8" y="369.70" font-size="10.600" text-anchor="end" fill="#000" letter-spacing="-.55" stroke="#000" stroke-width=".2">66</text><text x="25.2" y="383.80" font-size="10.4" font-weight="500" text-anchor="start" fill="#000" stroke="#000" stroke-width=".18">河野</text><text x="54.2" y="383.80" font-size="10.4" font-weight="500" text-anchor="start" fill="#000" stroke="#000" stroke-width=".18">恵美子</text><text x="99.5" y="383.80" font-size="10.4" font-weight="500" text-anchor="start" fill="#000" stroke="#000" stroke-width=".18">女</text><text x="152.8" y="383.70" font-size="10.600" text-anchor="end" fill="#000" letter-spacing="-.55" stroke="#000" stroke-width=".2">45</text><text x="182.8" y="383.70" font-size="10.600" text-anchor="end" fill="#000" letter-spacing="-.55" stroke="#000" stroke-width=".2">80</text><text x="212.8" y="383.70" font-size="10.600" text-anchor="end" fill="#000" letter-spacing="-.55" stroke="#000" stroke-width=".2">48</text><text x="242.8" y="383.70" font-size="10.600" text-anchor="end" fill="#000" letter-spacing="-.55" stroke="#000" stroke-width=".2">52</text><text x="272.8" y="383.70" font-size="10.600" text-anchor="end" fill="#000" letter-spacing="-.55" stroke="#000" stroke-width=".2">60</text><text x="302.8" y="383.70" font-size="10.600" text-anchor="end" fill="#000" letter-spacing="-.55" stroke="#000" stroke-width=".2">285</text><text x="345.8" y="383.70" font-size="10.600" text-anchor="end" fill="#000" letter-spacing="-.55" stroke="#000" stroke-width=".2">57</text><text x="25.2" y="397.80" font-size="10.4" font-weight="500" text-anchor="start" fill="#000" stroke="#000" stroke-width=".18">斎藤</text><text x="54.2" y="397.80" font-size="10.4" font-weight="500" text-anchor="start" fill="#000" stroke="#000" stroke-width=".18">美恵</text><text x="99.5" y="397.80" font-size="10.4" font-weight="500" text-anchor="start" fill="#000" stroke="#000" stroke-width=".18">女</text><text x="152.8" y="397.70" font-size="10.600" text-anchor="end" fill="#000" letter-spacing="-.55" stroke="#000" stroke-width=".2">90</text><text x="182.8" y="397.70" font-size="10.600" text-anchor="end" fill="#000" letter-spacing="-.55" stroke="#000" stroke-width=".2">82</text><text x="212.8" y="397.70" font-size="10.600" text-anchor="end" fill="#000" letter-spacing="-.55" stroke="#000" stroke-width=".2">68</text><text x="242.8" y="397.70" font-size="10.600" text-anchor="end" fill="#000" letter-spacing="-.55" stroke="#000" stroke-width=".2">95</text><text x="272.8" y="397.70" font-size="10.600" text-anchor="end" fill="#000" letter-spacing="-.55" stroke="#000" stroke-width=".2">92</text><text x="302.8" y="397.70" font-size="10.600" text-anchor="end" fill="#000" letter-spacing="-.55" stroke="#000" stroke-width=".2">427</text><text x="345.8" y="397.70" font-size="10.600" text-anchor="end" fill="#000" letter-spacing="-.55" stroke="#000" stroke-width=".2">85.4</text><text x="25.2" y="411.80" font-size="10.4" font-weight="500" text-anchor="start" fill="#000" stroke="#000" stroke-width=".18">篠原</text><text x="54.2" y="411.80" font-size="10.4" font-weight="500" text-anchor="start" fill="#000" stroke="#000" stroke-width=".18">信子</text><text x="99.5" y="411.80" font-size="10.4" font-weight="500" text-anchor="start" fill="#000" stroke="#000" stroke-width=".18">女</text><text x="152.8" y="411.70" font-size="10.600" text-anchor="end" fill="#000" letter-spacing="-.55" stroke="#000" stroke-width=".2">48</text><text x="182.8" y="411.70" font-size="10.600" text-anchor="end" fill="#000" letter-spacing="-.55" stroke="#000" stroke-width=".2">77</text><text x="212.8" y="411.70" font-size="10.600" text-anchor="end" fill="#000" letter-spacing="-.55" stroke="#000" stroke-width=".2">42</text><text x="242.8" y="411.70" font-size="10.600" text-anchor="end" fill="#000" letter-spacing="-.55" stroke="#000" stroke-width=".2">50</text><text x="272.8" y="411.70" font-size="10.600" text-anchor="end" fill="#000" letter-spacing="-.55" stroke="#000" stroke-width=".2">78</text><text x="302.8" y="411.70" font-size="10.600" text-anchor="end" fill="#000" letter-spacing="-.55" stroke="#000" stroke-width=".2">295</text><text x="345.8" y="411.70" font-size="10.600" text-anchor="end" fill="#000" letter-spacing="-.55" stroke="#000" stroke-width=".2">59</text><text x="22.8" y="425.80" font-size="10.4" font-weight="500" text-anchor="start" fill="#000" stroke="#000" stroke-width=".18">クラス平均</text><text x="152.8" y="425.70" font-size="10.600" text-anchor="end" fill="#000" letter-spacing="-.55" stroke="#000" stroke-width=".2">68.8</text><text x="182.8" y="425.70" font-size="10.600" text-anchor="end" fill="#000" letter-spacing="-.55" stroke="#000" stroke-width=".2">68.9</text><text x="212.8" y="425.70" font-size="10.600" text-anchor="end" fill="#000" letter-spacing="-.55" stroke="#000" stroke-width=".2">68.9</text><text x="242.8" y="425.70" font-size="10.600" text-anchor="end" fill="#000" letter-spacing="-.55" stroke="#000" stroke-width=".2">69.9</text><text x="272.8" y="425.70" font-size="10.600" text-anchor="end" fill="#000" letter-spacing="-.55" stroke="#000" stroke-width=".2">71.1</text><text x="26.6" y="439.80" font-size="10.4" font-weight="500" text-anchor="start" fill="#000" stroke="#000" stroke-width=".18">男子平均</text><rect x="186.0" y="246.20" width="31.0" height="15.20" fill="none" stroke="#1e7145" stroke-width="2"/><rect x="212.900" y="257.400" width="6.600" height="6.400" fill="#1e7145" stroke="#fff" stroke-width="1"/><path d="M208 248.200 H215.200 V254 L212.800 251.800 H208 Z" fill="#7b7be0"/><path d="M186 204 H217.300" stroke="#1e7145" stroke-width="1.700"/><path d="M22.400 246.50 V260.50" stroke="#1e7145" stroke-width="1.600"/><rect x="930" y="206.500" width="7" height="98" rx="3.500" fill="#a3a3a3"/></svg>
<div id="tabbar"></div><div class="abs" style="left:0;top:443.500px;width:940px;height:1px;background:#d4d4d4"></div><div class="abs" style="left:60.500px;top:442.500px;width:101.500px;height:24px;background:#fff;border-radius:0 0 4px 4px;box-shadow:0 .5px 1.500px rgba(0,0,0,.38)"></div><div class="abs" style="left:60.500px;top:446px;width:101.500px;text-align:center;font-size:11.100px;line-height:20px;color:#1e7145;white-space:nowrap">テスト成績表</div><svg class="ico" style="left:0;top:443px" width="940" height="50" viewBox="0 443 940 50"><path d="M22 451.500 V461 L14.500 456.200 Z M37.500 451.500 V461 L45 456.200 Z" fill="#bcbcbc"/><path d="M176.500 456.300 H186.500 M181.500 451.300 V461.300" stroke="#454545" stroke-width="1.800"/><path d="M200.500 447 V467" stroke="#d0d0d0" stroke-width="1"/><circle cx="26.500" cy="476.500" r="2.600" fill="#6b6b6b"/><path d="M27.300 479 V485.500" stroke="#6b6b6b" stroke-width="1.100"/><path d="M24 486.300 H32.500" stroke="#6b6b6b" stroke-width="2.600"/><path d="M30.300 475.700 H37.200 L38.600 477.300 M35.300 475.700 V484 Q35.300 487 32 487" fill="none" stroke="#6b6b6b" stroke-width="1.500"/><rect x="622" y="470.500" width="37" height="23" fill="#afafaf"/><rect x="633.900" y="475" width="13" height="13" rx=".8" fill="#fff"/><rect x="635.30" y="476.40" width="2.600" height="2.600" fill="#a2a2a2"/><rect x="635.30" y="480.30" width="2.600" height="2.600" fill="#a2a2a2"/><rect x="635.30" y="484.20" width="2.600" height="2.600" fill="#a2a2a2"/><rect x="639.20" y="476.40" width="2.600" height="2.600" fill="#a2a2a2"/><rect x="639.20" y="480.30" width="2.600" height="2.600" fill="#a2a2a2"/><rect x="639.20" y="484.20" width="2.600" height="2.600" fill="#a2a2a2"/><rect x="643.10" y="476.40" width="2.600" height="2.600" fill="#a2a2a2"/><rect x="643.10" y="480.30" width="2.600" height="2.600" fill="#a2a2a2"/><rect x="643.10" y="484.20" width="2.600" height="2.600" fill="#a2a2a2"/><rect x="670.300" y="475.700" width="12.300" height="11.500" rx="1.300" fill="none" stroke="#757575" stroke-width="1.400"/><rect x="672.900" y="477.800" width="7.100" height="7.300" fill="#c9c9c9" stroke="#8a8a8a" stroke-width=".7"/><path d="M674.500 479.700 h4 M674.500 481.500 h4 M674.500 483.300 h4" stroke="#6f6f6f" stroke-width=".8"/><path d="M706 476 H718.100 V487.200 H706 Z M706 482.300 H713.900 V476 M710.100 476 V482.300" fill="none" stroke="#757575" stroke-width="1.300"/><path d="M738.300 481.800 H746.100" stroke="#7a7a7a" stroke-width="2.200"/><rect x="754" y="479.700" width="98" height="4.300" rx="2.150" fill="#a3a3a3"/><circle cx="803" cy="481.800" r="5.600" fill="#fff" stroke="#c4c4c4" stroke-width=".600"/><path d="M860.300 481.800 H867.900 M864.100 478 V485.600" stroke="#6a6a6a" stroke-width="2.100"/></svg><div id="status" style="z-index:-1"></div><div class="abs" style="left:878.600px;top:472px;width:44px;text-align:center;font-size:12.400px;line-height:20px;color:#505050">100%</div>
<div class="abs" style="left:230px;top:124px;width:242px;height:247.500px;border-radius:6px;background:#f4f4f4;box-shadow:0 0 0 .5px rgba(0,0,0,.16),0 4px 14px rgba(0,0,0,.28),0 0 3px rgba(0,0,0,.18)"></div><svg class="ico" style="left:212px;top:228px" width="20" height="40" viewBox="212 228 20 40"><path d="M230.500 233.500 C230.500 241.500 218.800 246 218.800 248.300 C218.800 250.600 230.500 253.500 230.500 260.500 Z" fill="#efefef" stroke="rgba(0,0,0,.16)" stroke-width=".700"/><rect x="230" y="232" width="2" height="30" fill="#f3f3f3"/></svg><div class="abs" style="left:230px;top:124px;width:242px;height:103.500px;border-radius:6px 6px 0 0;background:#fff"></div><div class="abs" style="left:230px;top:227px;width:242px;height:1px;background:#e2e2e2"></div><div class="abs" style="left:230px;top:324.500px;width:242px;height:1px;background:#e2e2e2"></div><div class="abs" style="left:243px;top:335px;width:215.700px;height:26px;border-radius:3px;background:#fff"></div><div class="abs" style="left:240px;top:139px;width:24px;height:24px;border-radius:50%;background:#ec1212"></div><div class="abs" style="left:240px;top:139px;width:24px;height:24px;line-height:24px;text-align:center;font-size:10px;font-weight:400;color:#fff;letter-spacing:-.1px;-webkit-text-stroke:.3px #fff">YK</div><div class="abs" style="left:275px;top:141px;font-size:12.250px;line-height:20px;font-weight:700;color:#434343;white-space:nowrap;letter-spacing:-.02px">Yoshie Kohama</div><div class="abs" style="left:276px;top:158.8px;font-size:12px;line-height:20px;color:#505050;white-space:nowrap">最高得点でっせ。</div><div class="abs" style="left:275px;top:180.9px;font-size:12px;line-height:20px;color:#717171;white-space:nowrap;letter-spacing:0">2020/09/09 16:37</div><div class="abs" style="left:240px;top:237px;width:24px;height:24px;border-radius:50%;background:#ec1212"></div><div class="abs" style="left:240px;top:237px;width:24px;height:24px;line-height:24px;text-align:center;font-size:10px;font-weight:400;color:#fff;letter-spacing:-.1px;-webkit-text-stroke:.3px #fff">YK</div><div class="abs" style="left:275px;top:239px;font-size:12.250px;line-height:20px;font-weight:700;color:#434343;white-space:nowrap;letter-spacing:-.02px">Yoshie Kohama</div><div class="abs" style="left:276px;top:256.8px;font-size:12px;line-height:20px;color:#505050;white-space:nowrap">せやな</div><div class="abs" style="left:275px;top:278.9px;font-size:12px;line-height:20px;color:#717171;white-space:nowrap;letter-spacing:0">2020/09/09 16:39</div><div class="abs" style="left:420.500px;top:128.500px;font-size:11px;line-height:20px;color:#808080">F4</div><div class="abs" style="left:444.200px;top:137.200px;width:2.600px;height:2.600px;border-radius:50%;background:#222;box-shadow:5.200px 0 0 #222,10.400px 0 0 #222"></div><div class="abs" style="left:439.500px;top:199px;font-size:11px;line-height:20px;font-weight:700;color:#555;white-space:nowrap">編集</div><div class="abs" style="left:252px;top:338px;font-size:11.500px;line-height:20px;color:#c2c2c2;white-space:nowrap">返信...</div><svg class="ico" style="left:438px;top:340.700px" width="18" height="17" viewBox="0 0 18 17"><path d="M1.500 1.500 L16.500 8.300 L1.500 15.300 L3.800 8.300 Z M3.800 8.300 H16" fill="none" stroke="#e2e2e2" stroke-width="1" stroke-linejoin="round"/></svg><div class="abs" style="left:453.800px;top:132.700px;width:157.500px;height:46.600px;border-radius:6px;background:#ececec;box-shadow:0 0 0 .5px rgba(0,0,0,.2),0 5px 14px rgba(0,0,0,.3)"></div><div class="abs" style="left:453.800px;top:137.200px;width:157.500px;height:18.300px;background:#3f8ef6"></div><div class="abs" style="left:475.500px;top:136.600px;font-size:13.100px;line-height:20px;color:#fff;white-space:nowrap;letter-spacing:-.35px">スレッドを解決する</div><div class="abs" style="left:475.500px;top:155.800px;font-size:13.100px;line-height:20px;color:#3a3a3a;white-space:nowrap;letter-spacing:-.35px">スレッドの削除</div><svg class="ico" style="left:588px;top:144px" width="16" height="22" viewBox="0 0 16 22"><path d="M3 2.500 V17.300 L6.500 14 L9 19.800 L11.700 18.600 L9.200 13 H14 Z" fill="#000" stroke="#fff" stroke-width="1.100" stroke-linejoin="round"/></svg>
</div></body></html>
